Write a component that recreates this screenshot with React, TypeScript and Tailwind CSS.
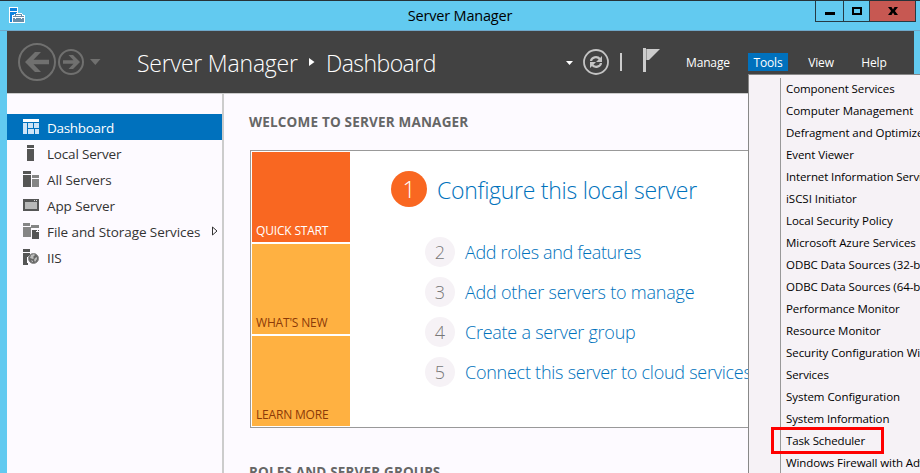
import type { ReactNode } from "react";

const navItems = [
  { label: "Dashboard", icon: "dashboard", tracking: "tracking-[-0.3px]" },
  { label: "Local Server", icon: "local", tracking: "tracking-[-0.18px]" },
  { label: "All Servers", icon: "all", tracking: "tracking-[-0.1px]" },
  { label: "App Server", icon: "app", tracking: "tracking-[-0.1px]" },
  { label: "File and Storage Services", icon: "file", tracking: "tracking-[-0.08px]" },
  { label: "IIS", icon: "iis", tracking: "tracking-[-0.1px]" },
];

const steps = [
  { n: 2, label: "Add roles and features", tracking: "tracking-[-0.35px]" },
  { n: 3, label: "Add other servers to manage", tracking: "tracking-[-0.22px]" },
  { n: 4, label: "Create a server group", tracking: "tracking-[-0.25px]" },
  { n: 5, label: "Connect this server to cloud services", tracking: "tracking-[-0.25px]" },
];

const tools = [
  { label: "Component Services", tracking: "tracking-[-0.08px]" },
  { label: "Computer Management", tracking: "tracking-[-0.05px]" },
  { label: "Defragment and Optimize Drives", tracking: "tracking-[-0.08px]" },
  { label: "Event Viewer", tracking: "tracking-[-0.1px]" },
  { label: "Internet Information Services (IIS) Manager", tracking: "tracking-[-0.12px]" },
  { label: "iSCSI Initiator", tracking: "tracking-[-0.03px]" },
  { label: "Local Security Policy", tracking: "tracking-[-0.03px]" },
  { label: "Microsoft Azure Services", tracking: "tracking-[-0.06px]" },
  { label: "ODBC Data Sources (32-bit)", tracking: "tracking-[-0.07px]" },
  { label: "ODBC Data Sources (64-bit)", tracking: "tracking-[-0.07px]" },
  { label: "Performance Monitor", tracking: "tracking-[-0.1px]" },
  { label: "Resource Monitor", tracking: "tracking-[-0.06px]" },
  { label: "Security Configuration Wizard", tracking: "tracking-[-0.06px]" },
  { label: "Services", tracking: "tracking-[-0.1px]" },
  { label: "System Configuration", tracking: "tracking-[-0.05px]" },
  { label: "System Information", tracking: "tracking-[-0.12px]" },
  { label: "Task Scheduler", tracking: "tracking-[-0.12px]" },
  { label: "Windows Firewall with Advanced Security", tracking: "tracking-[-0.1px]" },
];

const navShapes: Record<string, ReactNode> = {
  dashboard: (
    <>
      <path fill="#fff" d="M0 0h16v3H0z" />
      <path fill="#cfe4f6" d="M0 4h4v11H0zM5 4h5v5H5zM11 4h5v5h-5zM5 10h6v5H5zM12 10h4v5h-4z" />
    </>
  ),
  local: <path fill="#555" d="M4 0h7v3H4zM4 4h7v12H4z" />,
  all: (
    <>
      <path fill="#555" d="M0 0h8v3H0zM0 4h8v12H0z" />
      <path fill="#858585" d="M9 4h7v3H9zM9 8h7v8H9z" />
    </>
  ),
  app: (
    <>
      <path fill="#555" d="M0 2h16v12H0z" />
      <path fill="#b8b8b8" d="M2 5h12v7H2z" />
      <path fill="#ddd" d="M11 3h1v1h-1zM13 3h1v1h-1z" />
    </>
  ),
  file: (
    <>
      <path fill="#858585" d="M0 0h6l1 1v2H0zM0 4h8v10H0zM8 2h8v4H8z" />
      <path fill="#fdfaff" d="M8 5h7l1 1v1H9v9H8z" />
      <path fill="#555" d="M9 7h7v9H9z" />
      <path fill="#fdfaff" d="M13 8h2v1h-2zM14 7h2v2h-2z" />
      <path fill="#555" d="M15 7h1v1h-1z" />
    </>
  ),
  iis: (
    <>
      <path fill="#555" d="M0 0h7v3H0zM0 4h7v1L5 7l-1 2v3l1 3v1H0z" />
      <circle cx="10.500" cy="9.500" r="5" fill="#666" stroke="#8a8a8a" shapeRendering="auto" />
      <path fill="#bbb" d="M8 6l3-1 1 1-2 2 1 1-1 1-3-1zM12 9l2-1v2l-2 3-1-2zM8 11l2 1v1H9z" shapeRendering="auto" />
    </>
  ),
};

function ServerManagerIcon() {
  return (
    <svg width="17" height="17" viewBox="0 0 17 17" shapeRendering="crispEdges">
      <path fill="#fff" d="M0 0h9v6h4l1 2h2v8H0z" />
      <path fill="#0d83df" d="M1 1h7v3H1zM1 5h7v1L5 7v1H3v7H1z" />
      <path fill="#668da9" d="M4 9h11v6H4z" />
      <path fill="#668da9" d="M6 7h7v2H6z" />
      <path fill="#fff" d="M7 8h5v1H7zM4 10h11v1H4zM6 11h1v1H6zM12 11h1v1h-1z" />
    </svg>
  );
}

function NavArrows() {
  return (
    <svg width="84" height="40" viewBox="0 0 84 40" fill="none" stroke="#70706f">
      <circle cx="19" cy="20" r="18" strokeWidth="2" />
      <path fill="#70706f" stroke="none" d="M7 20l10-10h6l-7.500 7.700H31v4.600H15.500L23 30h-6z" />
      <circle cx="53" cy="20" r="12" strokeWidth="2" />
      <path fill="#70706f" stroke="none" d="M62 20l-7 7h-4.500l5-5.300H45v-3.400h10.500l-5-5.300H55z" />
      <path fill="#70706f" stroke="none" d="M72 17h10.500l-5.200 6z" />
    </svg>
  );
}

function HeaderIcons() {
  return (
    <svg width="96" height="30" viewBox="0 0 96 30">
      <path fill="#fff" d="M1 13h7l-3.500 4z" />
      <circle cx="31" cy="14" r="12" fill="none" stroke="#c4c4c4" strokeWidth="1.800" />
      <g fill="none" stroke="#c4c4c4" strokeWidth="2.200">
        <path d="M26 13c.4-3.600 6-5.500 9-1.800" />
        <path d="M36 15c-.4 3.600-6 5.500-9 1.800" />
      </g>
      <path fill="#c4c4c4" d="M37 8v6h-6zM25 20v-6h6z" />
      <path fill="#ccc" d="M55 5h2v18h-2z" />
      <path fill="#ccc" d="M78 0h3v24h-3z" />
      <path fill="#999" d="M81 1h1v11h-1z" />
      <path fill="#ccc" d="M82 1h13L84 12h-2z" />
    </svg>
  );
}

function TitleBar() {
  return (
    <div className="flex h-[31px] shrink-0 border-b border-[#6fa8c9]">
      <div className="w-[270px] pl-[9px] pt-[7px]">
        <ServerManagerIcon />
      </div>
      <div className="w-[380px] pt-[6px] text-center text-[14.500px] leading-[20px] tracking-[-0.200px] text-black">
        Server Manager
      </div>
      <div className="ml-auto mr-[4px] flex h-[22px] border-x border-b border-[#263a43]">
        <div className="flex w-[27px] justify-center pt-[12px]">
          <div className="h-[3px] w-[10px] bg-black" />
        </div>
        <div className="flex w-[26px] justify-center border-l border-[#263a43] pt-[7px]">
          <div className="h-[8px] w-[10px] border-2 border-black" />
        </div>
        <div className="flex w-[46px] justify-center border-l border-[#263a43] bg-[#c75852] pt-[7px]">
          <svg width="10" height="8" viewBox="0 0 10 8">
            <path d="M0 0h3.500L5 2.500 6.500 0H10L6.900 4 10 8H6.500L5 5.500 3.500 8H0l3.100-4z" />
          </svg>
        </div>
      </div>
    </div>
  );
}

function Header() {
  return (
    <div className="flex h-[63px] shrink-0 items-start border-b border-[#ccc] bg-[#424242] text-white">
      <div className="shrink-0 pl-[11px] pt-[11px]">
        <NavArrows />
      </div>
      <div className="ml-[35px] flex w-[428px] shrink-0 items-center whitespace-nowrap pt-[15px] text-[23px] font-light leading-[34px] tracking-[-0.550px]">
        <span className="w-[162px] tracking-[-0.200px]">Server Manager</span>
        <svg width="6" height="8" viewBox="0 0 6 8" className="mb-[3px] ml-[10px] mr-[11px]">
          <path fill="#fff" d="M0 0l5.500 4L0 8z" />
        </svg>
        <span>Dashboard</span>
      </div>
      <div className="shrink-0 pt-[17px]">
        <HeaderIcons />
      </div>
      <div className="flex shrink-0 pt-[22px] text-[12px] leading-[18px] tracking-[-0.150px]">
        <span className="ml-[19px] w-[68px] pl-[6px] pt-px">Manage</span>
        <span className="h-[18px] w-[40px] bg-[#0071bd] pt-px text-center">Tools</span>
        <span className="w-[66px] pt-px text-center">View</span>
        <span className="w-[40px] pt-px text-center">Help</span>
      </div>
    </div>
  );
}

function Sidebar() {
  return (
    <nav className="w-[217px] shrink-0 border-r-2 border-[#ccc] pt-[20px]">
      {navItems.map((item, i) => (
        <div
          key={item.label}
          className={
            i === 0
              ? "flex h-[26px] items-center bg-[#0071bd] pl-[16px] text-white"
              : "flex h-[26px] items-center pl-[16px] text-[#333]"
          }
        >
          <svg width="16" height="16" viewBox="0 0 16 16" shapeRendering="crispEdges">
            {navShapes[item.icon]}
          </svg>
          <span className={`ml-[8px] mt-[2px] whitespace-nowrap text-[13.500px] leading-[20px] ${item.tracking}`}>
            {item.label}
          </span>
          {item.icon === "file" && (
            <svg width="8" height="10" viewBox="0 0 8 10" className="ml-auto mr-[3px]" fill="none" stroke="#333">
              <path d="M1.500 1l4.500 4-4.500 4z" />
            </svg>
          )}
        </div>
      ))}
    </nav>
  );
}

function Tile({ label, className }: { label: string; className: string }) {
  return (
    <div className={`flex h-[90px] w-[98px] items-end whitespace-nowrap pb-[2px] pl-[4px] text-[12px] leading-[18px] tracking-[-0.180px] ${className}`}>
      {label}
    </div>
  );
}

function Welcome() {
  return (
    <main className="min-w-0 flex-1 overflow-hidden pl-[25px] pt-[18px]">
      <h1 className="text-[13.500px] font-bold leading-[20px] tracking-[0.190px] text-[#666]">WELCOME TO SERVER MANAGER</h1>
      <section className="ml-[1px] mt-[18px] flex h-[278px] w-[700px] border border-[#999] bg-white p-px">
        <div className="flex flex-col gap-[2px]">
          <Tile label="QUICK START" className="bg-[#f96721] text-white" />
          <Tile label="WHAT'S NEW" className="bg-[#ffb141] text-[#8c3a08]" />
          <Tile label="LEARN MORE" className="bg-[#ffb141] text-[#8c3a08]" />
        </div>
        <div className="ml-[41px] pt-[19px] font-light">
          <div className="flex h-[36px] items-center">
            <span className="flex size-[36px] items-center justify-center rounded-full bg-[#f96721] text-[23px] text-white">1</span>
            <span className="ml-[10px] mt-[3px] whitespace-nowrap text-[23px] tracking-[-0.270px] text-[#0072bc]">
              Configure this local server
            </span>
          </div>
          <div className="mt-[30px] flex flex-col gap-[10px] pl-[34px]">
            {steps.map((s) => (
              <div key={s.n} className="flex h-[30px] items-center">
                <span className="flex size-[30px] items-center justify-center rounded-full bg-[#f6f2f6] text-[18px] text-[#777]">
                  {s.n}
                </span>
                <span className={`ml-[10px] whitespace-nowrap text-[18px] text-[#0072bc] ${s.tracking}`}>{s.label}</span>
              </div>
            ))}
          </div>
        </div>
      </section>
      <h2 className="mt-[34px] text-[13.500px] font-bold leading-[20px] tracking-[0.160px] text-[#666]">ROLES AND SERVER GROUPS</h2>
    </main>
  );
}

function ToolsMenu() {
  return (
    <div className="absolute left-[748px] top-[74px] h-[410px] w-[300px] border border-[#888] bg-[#f6f2f6] pl-[31px] pt-[4px]">
      <ul className="-mt-px h-[420px] border-l border-[#999] pl-[5px] text-[11.500px] leading-[22px] text-black">
        {tools.map((t) => (
          <li key={t.label} className={`h-[22px] whitespace-nowrap ${t.tracking}`}>
            {t.label}
          </li>
        ))}
      </ul>
    </div>
  );
}

export default function App() {
  return (
    <div className="relative h-[473px] w-[920px] overflow-hidden border-t border-[#263238] bg-[#62caf0] font-['Open_Sans','Noto_Sans',sans-serif]">
      <div className="-mt-px flex h-[473px] flex-col">
        <TitleBar />
        <div className="ml-[7px] mr-[6px] flex min-h-0 flex-1 flex-col bg-[#fdfaff]">
          <Header />
          <div className="flex min-h-0 flex-1">
            <Sidebar />
            <Welcome />
          </div>
        </div>
      </div>
      <div className="absolute -top-px left-0">
        <ToolsMenu />
        <div className="absolute left-[771px] top-[427px] h-[27px] w-[113px] border-[3px] border-[#f00]" />
      </div>
    </div>
  );
}
